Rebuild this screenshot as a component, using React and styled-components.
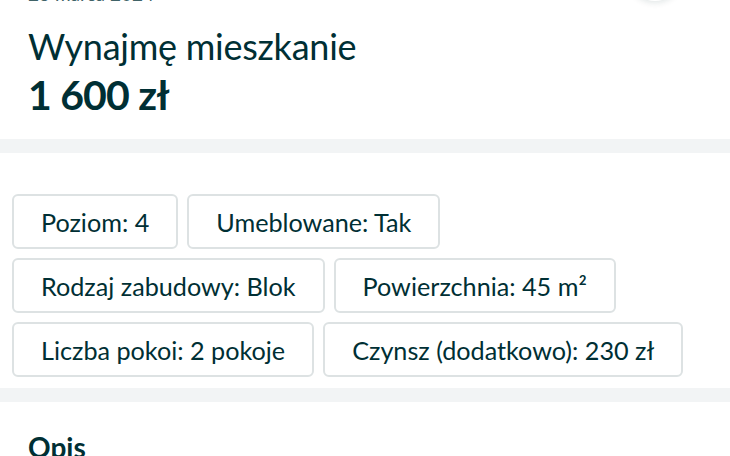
import React from "react";
import styled, { createGlobalStyle } from "styled-components";

const GlobalStyle = createGlobalStyle`
  html, body {
    margin: 0;
    padding: 0;
    background: #fff;
    overflow: hidden;
  }
  body {
    font-family: Lato, "Open Sans", sans-serif;
    color: #002f34;
  }
`;

const Page = styled.div`
  width: 730px;
  height: 456px;
  overflow: hidden;
  background: #fff;
`;

const Section = styled.section`
  background: #fff;
  padding: 0 28px;
`;

const Divider = styled.div`
  height: 14px;
  background: #f2f4f5;
`;

const TopRow = styled.div`
  display: flex;
  justify-content: space-between;
  align-items: flex-end;
  margin-top: -18px;
  height: 24px;
`;

const DateText = styled.span`
  font-size: 19px;
  line-height: 24px;
  color: #406367;
`;

const FavButton = styled.div`
  width: 56px;
  height: 56px;
  border-radius: 50%;
  background: #fff;
  box-shadow: 0 2px 6px rgba(0, 47, 52, 0.12);
  margin-right: 19px;
  margin-bottom: 5px;
`;

const Title = styled.h1`
  margin: 0;
  padding-top: 18px;
  font-size: 36px;
  font-weight: 400;
  line-height: 44px;
  letter-spacing: -0.25px;
`;

const Price = styled.div`
  font-size: 41px;
  font-weight: 700;
  line-height: 50px;
  margin-top: 2px;
  padding-bottom: 19px;
  letter-spacing: -0.8px;
`;

const ChipList = styled.div`
  padding: 41px 12px 11px;
  display: flex;
  flex-direction: column;
  gap: 9px;
`;

const ChipRow = styled.div`
  display: flex;
  gap: 9px;
`;

const Chip = styled.div`
  box-sizing: border-box;
  height: 55px;
  padding: 0 27px;
  display: flex;
  align-items: center;
  border: 2px solid #dde2e3;
  border-radius: 6px;
  font-size: 25.2px;
  color: #002f34;
  white-space: nowrap;
`;

const SectionTitle = styled.h2`
  margin: 0;
  padding-top: 27px;
  font-size: 28px;
  font-weight: 700;
  line-height: 36px;
`;

const rows = [
  ["Poziom: 4", "Umeblowane: Tak"],
  ["Rodzaj zabudowy: Blok", "Powierzchnia: 45 m²"],
  ["Liczba pokoi: 2 pokoje", "Czynsz (dodatkowo): 230 zł"],
];

export default function App() {
  return (
    <Page>
      <GlobalStyle />
      <Section>
        <TopRow>
          <DateText>23 marca 2024</DateText>
          <FavButton />
        </TopRow>
        <Title>Wynajmę mieszkanie</Title>
        <Price>1 600 zł</Price>
      </Section>
      <Divider />
      <ChipList>
        {rows.map((row, i) => (
          <ChipRow key={i}>
            {row.map(label => (
              <Chip key={label}>{label}</Chip>
            ))}
          </ChipRow>
        ))}
      </ChipList>
      <Divider />
      <Section>
        <SectionTitle>Opis</SectionTitle>
      </Section>
    </Page>
  );
}
